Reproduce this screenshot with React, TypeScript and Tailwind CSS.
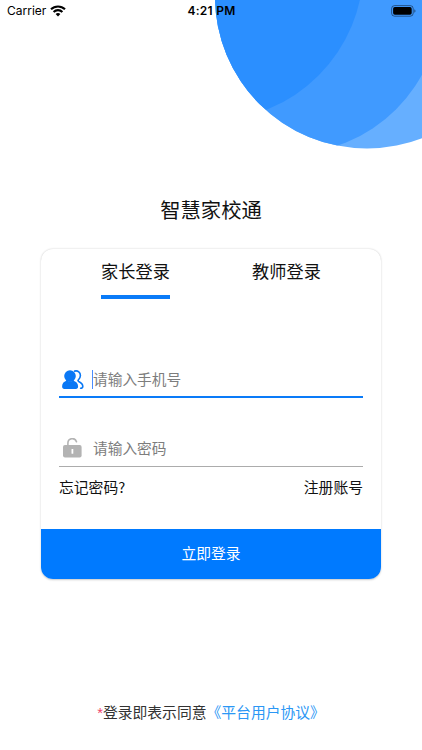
import { useState } from 'react';
import type { ReactNode } from 'react';

const TABS = [
    { id: 'parent', label: '家长登录' },
    { id: 'teacher', label: '教师登录' },
];

function HeaderCircles() {
    return (
        <svg className="absolute top-0 right-0" width="222" height="160" viewBox="200 0 222 160">
            <defs>
                <clipPath id="disc">
                    <circle cx="367" cy="-3.5" r="152" />
                </clipPath>
            </defs>
            <g clipPath="url(#disc)">
                <rect x="200" y="0" width="222" height="160" fill="#66afff" />
                <circle cx="288" cy="1" r="153" fill="#409aff" />
                <circle cx="210" cy="-33" r="153.5" fill="#2b8fff" />
            </g>
        </svg>
    );
}

function WifiIcon() {
    return (
        <svg width="16" height="12" viewBox="0 0 16 12" fill="none" stroke="#000" strokeWidth="2.1">
            <path d="M1 4.3a10 10 0 0 1 14 0" />
            <path d="M3.6 7a6.2 6.2 0 0 1 8.8 0" />
            <path d="M8 11.6 5.6 9.1a3.5 3.5 0 0 1 4.8 0z" fill="#000" stroke="none" />
        </svg>
    );
}

function BatteryIcon() {
    return (
        <svg width="26" height="12" viewBox="0 0 26 12">
            <rect x="1.6" y="0.6" width="21.6" height="10.6" rx="3" fill="none" stroke="#000" strokeOpacity="0.45" />
            <rect x="3.1" y="2.1" width="18.6" height="7.6" rx="1.7" />
            <path d="M24.3 4.2q1.2.5 1.2 1.8t-1.2 1.8z" fillOpacity="0.5" />
        </svg>
    );
}

function UsersIcon() {
    return (
        <svg width="22" height="20" viewBox="0 0 22 20">
            <g fill="#0a78f5">
                <ellipse cx="8" cy="6.1" rx="5.8" ry="5.9" />
                <path d="M.1 16.3c0-3.200 2-4.800 4.700-5.800q3.200 2.200 6.400 0c2.700 1 4.900 2.600 4.900 5.800 0 2-.8 2.700-2.200 2.700H2.300C.9 19 .1 18.300.1 16.300z" />
            </g>
            <path
                d="M12.6 1.100c3.400-.8 5.800 1.400 5.800 4.500 0 2-.9 3.200-2.100 4.400-.5.6-.3 1.100.4 1.500 2.300 1.200 4.100 2.600 4.100 4.800 0 1.200-.7 2-2.200 2"
                fill="none"
                stroke="#0a78f5"
                strokeWidth="1.6"
                strokeLinecap="round"
            />
        </svg>
    );
}

function LockIcon() {
    return (
        <svg width="20" height="22" viewBox="0 0 20 22">
            <path d="M5.9 8.500V5a4.400 4.400 0 0 1 8.600-1.300" fill="none" stroke="#b3b3b3" strokeWidth="1.6" strokeLinecap="round" />
            <rect x="1" y="7" width="18.600" height="12.500" rx="2" fill="#b3b3b3" />
            <rect x="9.500" y="10.900" width="1.800" height="4.800" rx="0.5" fill="#fff" />
        </svg>
    );
}

function Field({ icon, placeholder, type, active }: { icon: ReactNode; placeholder: string; type: string; active?: boolean }) {
    return (
        <label className={`flex h-9 items-center border-b pt-px ${active ? 'border-b-2 border-[#0a7bf8]' : 'border-[#acacac]'}`}>
            <span className="flex w-[33px] shrink-0 pl-[3px]">{icon}</span>
            <span className={`h-[19px] w-px shrink-0 ${active ? 'bg-[#4a8dff]' : ''}`} />
            <input
                type={type}
                placeholder={placeholder}
                className="w-full min-w-0 bg-transparent pt-px text-[14.7px] outline-none placeholder:text-[#7d7d7d]"
            />
        </label>
    );
}

export default function App() {
    const [tab, setTab] = useState('parent');

    return (
        <div className="relative flex h-[750px] w-[422px] flex-col overflow-hidden bg-white font-['Liberation_Sans','Noto_Sans_CJK_SC',sans-serif] text-[#111]">
            <HeaderCircles />

            <div className="relative grid h-[22px] grid-cols-3 items-center pr-1.5 pl-[7px] font-['Inter',sans-serif] text-[12px] text-black">
                <div className="flex items-center gap-1">
                    <span>Carrier</span>
                    <WifiIcon />
                </div>
                <span className="text-center font-semibold tracking-[0.25px]">4:21 PM</span>
                <div className="flex justify-end">
                    <BatteryIcon />
                </div>
            </div>

            <h1 className="mt-[173px] text-center text-[20.3px] leading-8">智慧家校通</h1>

            <div className="mx-[41px] mt-[22px] flex h-[330px] flex-col overflow-hidden rounded-xl bg-white shadow-[0_0.5px_2px_rgba(0,0,0,0.22)]">
                <div className="grid grid-cols-2 px-[19px]">
                    {TABS.map((t) => (
                        <button key={t.id} onClick={() => setTab(t.id)} className="flex justify-center">
                            <span
                                className={`h-[50px] border-b-4 pt-[10px] text-[17.2px] leading-[26px] ${
                                    tab === t.id ? 'border-[#0a7bf8]' : 'border-transparent'
                                }`}
                            >
                                {t.label}
                            </span>
                        </button>
                    ))}
                </div>

                <div className="mt-[63px] flex flex-col gap-[33px] px-[18px]">
                    <Field icon={<UsersIcon />} placeholder="请输入手机号" type="tel" active />
                    <Field icon={<LockIcon />} placeholder="请输入密码" type="password" />
                </div>

                <div className="mt-[9px] flex justify-between px-[18px] text-[14.8px] leading-6">
                    <a href="#forgot" className="-mt-px font-['Noto_Sans_CJK_SC',sans-serif]">忘记密码?</a>
                    <a href="#register">注册账号</a>
                </div>

                <button className="mt-auto h-[50px] bg-[#007aff] text-[14.8px] text-white">立即登录</button>
            </div>

            <p className="mt-[122px] flex justify-center text-[14.8px] leading-6 text-[#333]">
                <span className="text-[#f0436a]">*</span>
                登录即表示同意
                <a href="#terms" className="text-[#2b97f5]">《平台用户协议》</a>
            </p>
        </div>
    );
}
